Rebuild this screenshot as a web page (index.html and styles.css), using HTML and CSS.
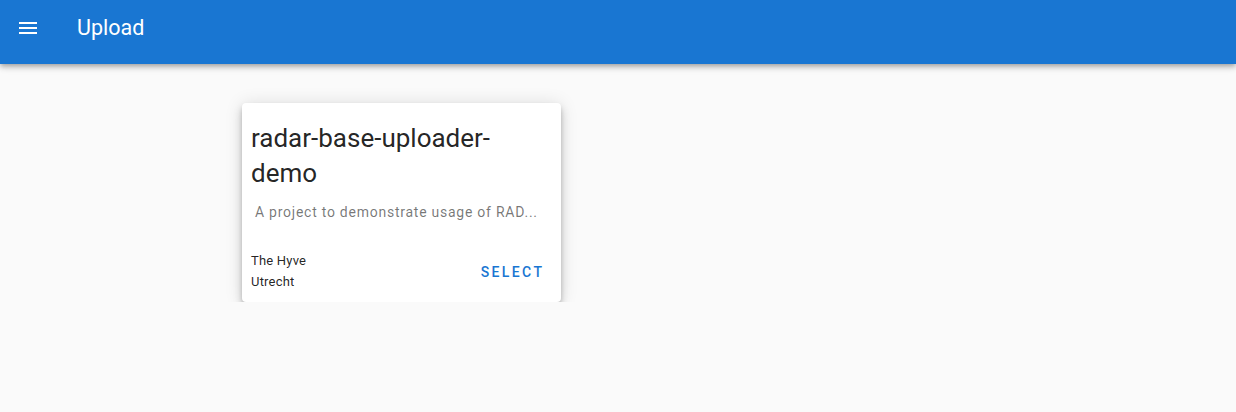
FILE: index.html
```html
<!DOCTYPE html>
<html>
<head>
<meta charset="utf-8">
<link rel="stylesheet" href="styles.css">
</head>
<body>
<header class="toolbar">
  <svg class="menu-icon" viewBox="0 0 24 24" width="24" height="24"><path fill="#fff" d="M3 18h18v-2H3v2zm0-5h18v-2H3v2zm0-7v2h18V6H3z"/></svg>
  <div class="toolbar-title">Upload</div>
</header>
<main class="content">
  <div class="card">
    <div class="card-title">radar-base-uploader-demo</div>
    <div class="card-desc">A project to demonstrate usage of RAD...</div>
    <div class="card-footer">
      <div class="org">
        <div>The Hyve</div>
        <div>Utrecht</div>
      </div>
      <button class="select-btn">SELECT</button>
    </div>
  </div>
</main>
</body>
</html>
```
FILE: styles.css
```css
html, body {
  margin: 0;
  padding: 0;
  background: #fafafa;
  font-family: Roboto, "Liberation Sans", sans-serif;
  color: rgba(0,0,0,0.87);
}
.toolbar {
  height: 64px;
  background: #1976d2;
  display: flex;
  align-items: flex-start;
  padding-left: 16px;
  box-shadow: 0 2px 4px -1px rgba(0,0,0,.2), 0 4px 5px 0 rgba(0,0,0,.14), 0 1px 10px 0 rgba(0,0,0,.12);
  position: relative;
  z-index: 2;
}
.menu-icon {
  margin-top: 16px;
  display: block;
}
.toolbar-title {
  margin-left: 37px;
  margin-top: 14px;
  color: #fff;
  font-size: 21.5px;
  line-height: 28px;
}
.content {
  padding: 39px 0 0 242px;
}
.card {
  width: 319px;
  background: #fff;
  border-radius: 4px;
  box-shadow: 0 3px 5px -1px rgba(0,0,0,.22), 0 6px 10px 0 rgba(0,0,0,.15), 0 1px 18px 0 rgba(0,0,0,.12);
  padding: 18px 0 10px 0;
}
.card-title {
  font-size: 26px;
  line-height: 35px;
  padding: 0 16px 0 9px;
  color: rgba(0,0,0,0.87);
}
.card-desc {
  margin-top: 11px;
  padding-left: 13px;
  font-size: 14px;
  line-height: 20px;
  letter-spacing: 0.75px;
  color: rgba(0,0,0,0.54);
  white-space: nowrap;
}
.card-footer {
  margin-top: 28px;
  display: flex;
  align-items: center;
  justify-content: space-between;
  padding: 0 19px 0 9px;
}
.org {
  font-size: 13px;
  line-height: 21px;
  letter-spacing: 0.2px;
  color: rgba(0,0,0,0.87);
}
.select-btn {
  background: none;
  border: none;
  padding: 0;
  margin-top: 2px;
  font-family: Roboto, "Liberation Sans", sans-serif;
  font-weight: 500;
  font-size: 14px;
  letter-spacing: 2.4px;
  color: #1976d2;
  margin-right: -2.4px;
}
```
